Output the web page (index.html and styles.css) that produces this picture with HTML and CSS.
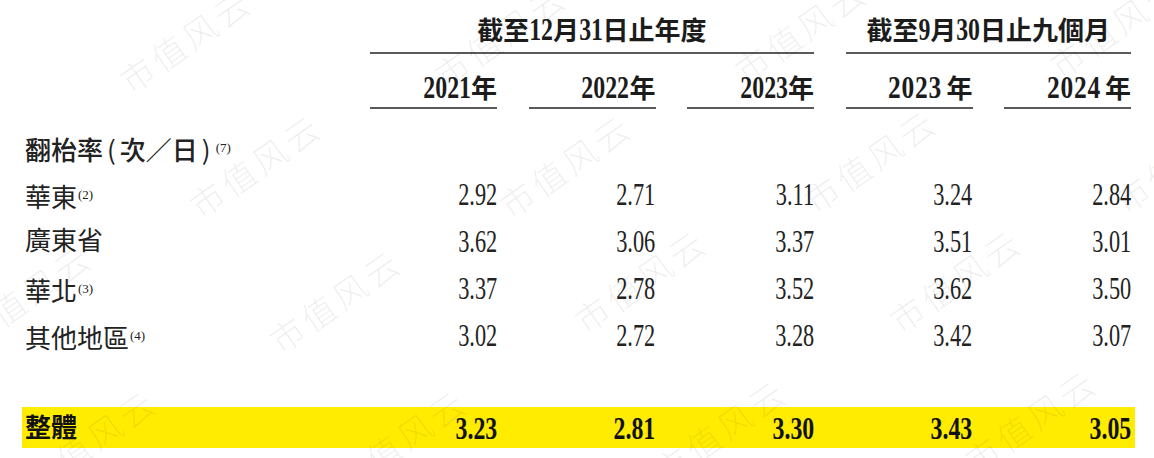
FILE: index.html
```html
<!DOCTYPE html>
<html lang="zh-Hant">
<head>
    <meta charset="UTF-8">
    <meta name="viewport" content="width=device-width, initial-scale=1.0">
    <title>翻枱率</title>
    <link rel="stylesheet" href="styles.css">
</head>
<body>
    <div class="sheet">
        <div class="row head-group">
            <div></div>
            <div class="group span-3">截至<span class="num d2">12</span>月<span class="num d2">31</span>日止年度</div>
            <div class="group span-2">截至<span class="num d1">9</span>月<span class="num d2">30</span>日止九個月</div>
        </div>
        <div class="row head-year">
            <div></div>
            <div class="year"><span class="num">2021</span>年</div>
            <div class="year"><span class="num">2022</span>年</div>
            <div class="year"><span class="num">2023</span>年</div>
            <div class="year wide"><span class="num">2023</span>年</div>
            <div class="year wide"><span class="num">2024</span>年</div>
        </div>
        <div class="row section">
            <div class="label">翻枱率<span class="paren">(</span>次／日<span class="paren">)</span><span class="note">(7)</span></div>
        </div>
        <div class="row data">
            <div class="label">華東<span class="note">(2)</span></div>
            <div class="cell"><span class="num">2.92</span></div>
            <div class="cell"><span class="num">2.71</span></div>
            <div class="cell"><span class="num">3.11</span></div>
            <div class="cell"><span class="num">3.24</span></div>
            <div class="cell"><span class="num">2.84</span></div>
        </div>
        <div class="row data">
            <div class="label">廣東省</div>
            <div class="cell"><span class="num">3.62</span></div>
            <div class="cell"><span class="num">3.06</span></div>
            <div class="cell"><span class="num">3.37</span></div>
            <div class="cell"><span class="num">3.51</span></div>
            <div class="cell"><span class="num">3.01</span></div>
        </div>
        <div class="row data">
            <div class="label">華北<span class="note">(3)</span></div>
            <div class="cell"><span class="num">3.37</span></div>
            <div class="cell"><span class="num">2.78</span></div>
            <div class="cell"><span class="num">3.52</span></div>
            <div class="cell"><span class="num">3.62</span></div>
            <div class="cell"><span class="num">3.50</span></div>
        </div>
        <div class="row data">
            <div class="label">其他地區<span class="note">(4)</span></div>
            <div class="cell"><span class="num">3.02</span></div>
            <div class="cell"><span class="num">2.72</span></div>
            <div class="cell"><span class="num">3.28</span></div>
            <div class="cell"><span class="num">3.42</span></div>
            <div class="cell"><span class="num">3.07</span></div>
        </div>
        <div class="spacer"></div>
        <div class="row total">
            <div class="label">整體</div>
            <div class="cell"><span class="num">3.23</span></div>
            <div class="cell"><span class="num">2.81</span></div>
            <div class="cell"><span class="num">3.30</span></div>
            <div class="cell"><span class="num">3.43</span></div>
            <div class="cell"><span class="num">3.05</span></div>
        </div>
    </div>

    <div class="watermarks">
        <span class="wm wm-1">市值风云</span>
        <span class="wm wm-2">市值风云</span>
        <span class="wm wm-3">市值风云</span>
        <span class="wm wm-4">市值风云</span>
        <span class="wm wm-5">市值风云</span>
        <span class="wm wm-6">市值风云</span>
        <span class="wm wm-7">市值风云</span>
        <span class="wm wm-8">市值风云</span>
        <span class="wm wm-9">市值风云</span>
        <span class="wm wm-10">市值风云</span>
        <span class="wm wm-11">市值风云</span>
        <span class="wm wm-12">市值风云</span>
        <span class="wm wm-13">市值风云</span>
        <span class="wm wm-14">市值风云</span>
        <span class="wm wm-15">市值风云</span>
        <span class="wm wm-16">市值风云</span>
    </div>
</body>
</html>
```

FILE: styles.css
```css
body {
    margin: 0;
    background: #fff;
    overflow: hidden;
    position: relative;
    height: 458px;
}

.sheet {
    padding-left: 22px;
    font-family: "Liberation Serif", "Noto Sans CJK TC", serif;
    font-size: 26px;
    color: #222;
}

.row {
    display: grid;
    grid-template-columns: 316.5px repeat(5, 127px);
    column-gap: 31.5px;
    width: fit-content;
}

.row > div {
    box-sizing: border-box;
    white-space: nowrap;
}

/* digits in the source are narrow: draw them bigger and squeeze */
.num {
    display: inline-block;
    font-size: 31px;
    transform: scaleX(.72);
    transform-origin: 100% 50%;
}

.d2 {
    margin-left: -7.4px;
}

.d1 {
    margin-left: -3.7px;
}

.head-group > div,
.head-year > div {
    font-weight: 700;
    color: #1c1c1c;
}

.head-group .num,
.head-year .num,
.total .num {
    transform: scaleX(.77);
}

.head-year .wide .num {
    transform: scaleX(.82);
    letter-spacing: 1px;
    margin-right: 4px;
}

.head-group > div {
    height: 54px;
    padding-top: 15px;
    line-height: 30px;
}

.group {
    text-align: center;
    border-bottom: 2px solid #5a5a5a;
}

.span-3 {
    grid-column: 2 / span 3;
}

.span-2 {
    grid-column: 5 / span 2;
}

.head-year > div {
    height: 55px;
    padding-top: 19px;
    line-height: 30px;
}

.year {
    text-align: right;
    border-bottom: 2px solid #5a5a5a;
}

.label {
    padding-left: 3px;
}

.note {
    font-size: 13px;
    vertical-align: 8px;
    margin-left: 1px;
}

.paren {
    font-family: "Noto Sans CJK TC", sans-serif;
    font-weight: 400;
    margin: 0 4px;
}

.section > div {
    height: 62px;
    padding-top: 24px;
    line-height: 30px;
    font-weight: 500;
}

.data > div {
    height: 47px;
    line-height: 47px;
}

.cell {
    text-align: right;
}

.spacer {
    height: 48px;
}

.total {
    background: #ffec00;
    padding-right: 4px;
}

.total > div {
    height: 41px;
    line-height: 44px;
    font-weight: 700;
    color: #111;
}

.watermarks {
    position: absolute;
    inset: 0;
    pointer-events: none;
    overflow: hidden;
}

.wm {
    position: absolute;
    transform: translate(-50%, -50%) rotate(-35deg);
    font-family: "Noto Sans CJK SC", sans-serif;
    font-weight: 300;
    font-size: 34px;
    letter-spacing: 4px;
    color: rgba(0, 0, 0, .07);
    white-space: nowrap;
}

.wm-1 { left: 185px; top: 40px; }
.wm-2 { left: 500px; top: 35px; }
.wm-3 { left: 800px; top: 30px; }
.wm-4 { left: 1115px; top: 25px; }
.wm-5 { left: 255px; top: 165px; }
.wm-6 { left: 565px; top: 165px; }
.wm-7 { left: 870px; top: 160px; }
.wm-8 { left: 1180px; top: 160px; }
.wm-9 { left: 25px; top: 295px; }
.wm-10 { left: 335px; top: 300px; }
.wm-11 { left: 640px; top: 280px; }
.wm-12 { left: 955px; top: 280px; }
.wm-13 { left: 90px; top: 440px; }
.wm-14 { left: 400px; top: 440px; }
.wm-15 { left: 720px; top: 430px; }
.wm-16 { left: 1030px; top: 420px; }
```
